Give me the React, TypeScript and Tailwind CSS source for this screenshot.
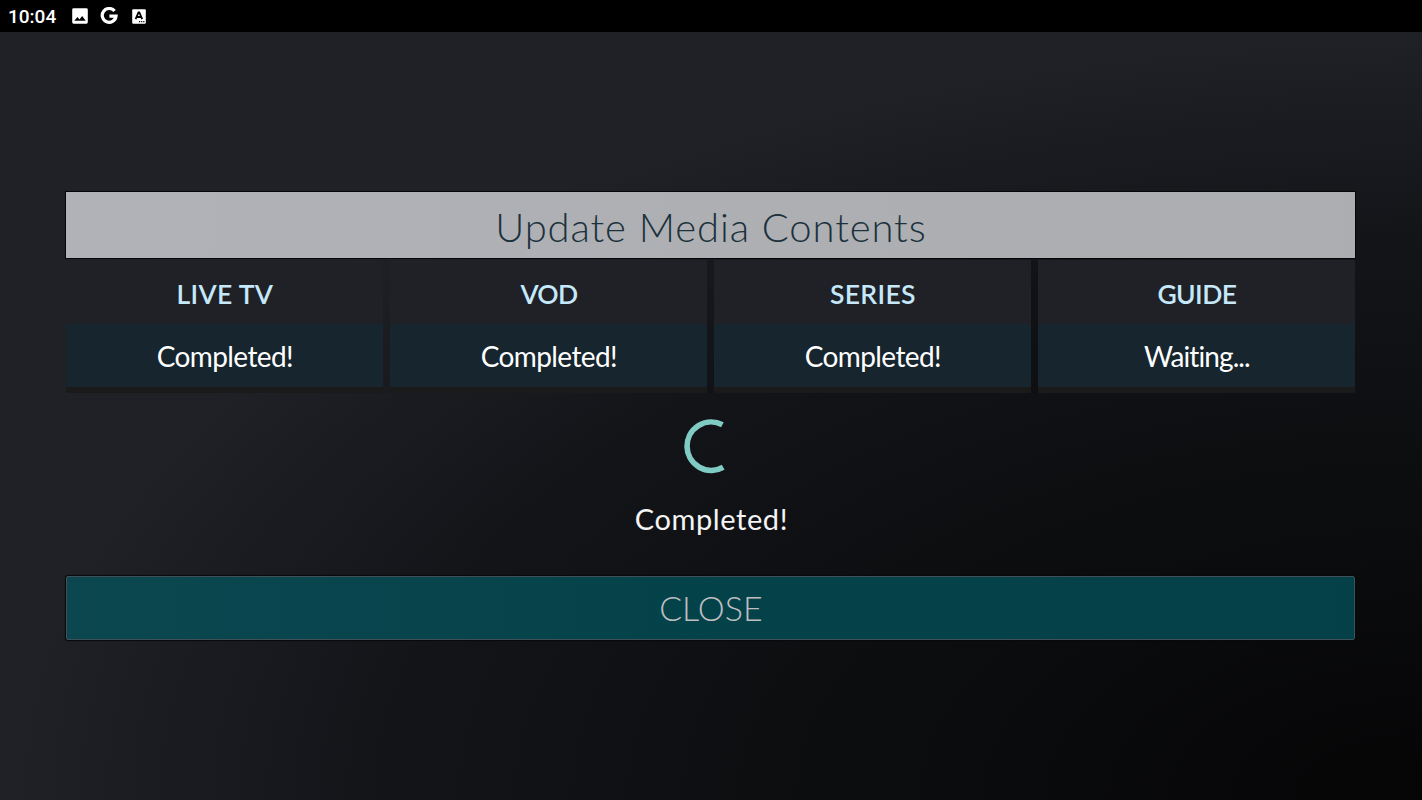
import React from "react";

interface MediaTask {
  name: string;
  status: string;
  nameClass: string;
  statusClass: string;
}

const tasks: MediaTask[] = [
  { name: "LIVE TV", status: "Completed!", nameClass: "tracking-[0.3px]", statusClass: "tracking-[-0.6px]" },
  { name: "VOD", status: "Completed!", nameClass: "tracking-[-0.7px]", statusClass: "tracking-[-0.6px]" },
  { name: "SERIES", status: "Completed!", nameClass: "tracking-[0.3px]", statusClass: "tracking-[-0.6px]" },
  { name: "GUIDE", status: "Waiting...", nameClass: "tracking-[-0.6px]", statusClass: "tracking-[-0.9px]" },
];

function StatusBar() {
  return (
    <header className="flex h-8 shrink-0 items-center bg-black pl-2 text-white">
      <span className="w-16 font-['Roboto',sans-serif] text-[19px] font-medium leading-none">10:04</span>
      <svg className="h-4 w-4" viewBox="0 0 16 16">
        <path fill="#fff" fillRule="evenodd" d="M1.6 0.3h12.8a1.4 1.4 0 0 1 1.4 1.4v12.6a1.4 1.4 0 0 1-1.4 1.4H1.6A1.4 1.4 0 0 1 .2 14.3V1.7A1.4 1.4 0 0 1 1.6 .3ZM2.3 12.8h11.4L10.2 8 7.4 11.4 5.5 9.1Z" />
      </svg>
      <svg className="ml-[12px] h-[18px] w-[18px]" viewBox="0 0 18 18" fill="none" stroke="#fff" strokeWidth="3.2">
        <path d="M14.6 4.1A6.9 6.9 0 1 0 16 9.2H9.4" />
      </svg>
      <svg className="ml-[14px] h-[15px] w-[14px]" viewBox="0 0 14 15">
        <rect width="13.6" height="14.4" x="0.2" y="0.3" rx="1" fill="#fff" />
        <path d="M3.6 10.2 6.5 3.4h.8l2.9 6.8M4.8 8h4.4" fill="none" stroke="#000" strokeWidth="1.8" />
        <path d="M7 12.6h1.2m.9 0h1.2m.9 0h1.2" stroke="#000" strokeWidth="1.1" />
      </svg>
    </header>
  );
}

function TaskColumn({ task }: { task: MediaTask }) {
  return (
    <section className="flex flex-1 flex-col text-center">
      <h2 className={`h-16 bg-[#202126] pt-[1px] text-[26.5px] font-semibold leading-[66px] text-[#c5e8fa] ${task.nameClass}`}>
        {task.name}
      </h2>
      <p className={`h-[63px] bg-[#16252e] text-[28px] leading-[65px] text-white ${task.statusClass}`}>
        {task.status}
      </p>
      <div className="h-[6px] bg-[#1a1a1b]" />
    </section>
  );
}

export default function App() {
  return (
    <div className="flex h-[800px] w-[1422px] flex-col overflow-hidden bg-black font-['Lato',sans-serif]">
      <StatusBar />
      <main className="flex flex-1 flex-col bg-[radial-gradient(100%_100%_at_100%_100%,#050506_0%,#0d0e10_45%,#131418_72%,#202126_100%)] pl-[66.4px] pr-[66.6px] pt-40">
        <h1 className="h-[66px] bg-[linear-gradient(to_right,#b1b2b7,#acadb0)] text-center text-[40px] font-light leading-[71px] tracking-[0.9px] text-[#1b323c] shadow-[0_0_0_1px_#050608]">
          Update Media Contents
        </h1>
        <div className="mt-[2px] flex gap-[7px] bg-[#00000010]">
          {tasks.map((task) => (
            <TaskColumn key={task.name} task={task} />
          ))}
        </div>
        <div className="flex flex-col items-center">
          <svg className="mt-[26px] h-[55px] w-[54px]" viewBox="0 0 54 55" fill="none">
            <path d="M38.4 5.7A24.2 24.2 0 1 0 39.2 48.2" stroke="#80cbc4" strokeWidth="5.6" />
          </svg>
          <p className="mt-[25px] pl-[1px] text-[29px] leading-[40px] tracking-[0.6px] text-[#f4f4f4]">Completed!</p>
        </div>
        <button className="mt-[37px] h-16 rounded-[2px] border border-[#3d5156] bg-[linear-gradient(to_right,#0c4750,#04424a_50%,#044047)] text-[34px] font-light leading-[62px] text-[#bebec0] shadow-[0_0_1px_1px_#08090b]">
          CLOSE
        </button>
      </main>
    </div>
  );
}
